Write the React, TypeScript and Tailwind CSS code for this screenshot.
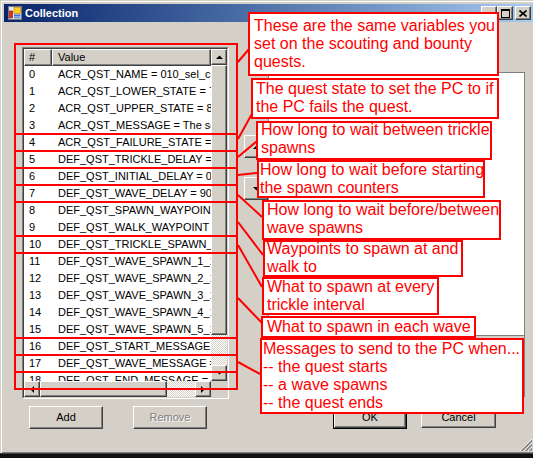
import React from 'react'

const ROWS: string[] = [
  'ACR_QST_NAME = 010_sel_cemetery',
  'ACR_QST_LOWER_STATE = 7',
  'ACR_QST_UPPER_STATE = 8',
  'ACR_QST_MESSAGE = The scouting party',
  'ACR_QST_FAILURE_STATE = 9',
  'DEF_QST_TRICKLE_DELAY = 30',
  'DEF_QST_INITIAL_DELAY = 0',
  'DEF_QST_WAVE_DELAY = 90',
  'DEF_QST_SPAWN_WAYPOINT = wp_spawn',
  'DEF_QST_WALK_WAYPOINT = wp_walk',
  'DEF_QST_TRICKLE_SPAWN_1 = c_zombie',
  'DEF_QST_WAVE_SPAWN_1_1 = c_zombie',
  'DEF_QST_WAVE_SPAWN_2_1 = c_zombie',
  'DEF_QST_WAVE_SPAWN_3_1 = c_ghoul',
  'DEF_QST_WAVE_SPAWN_4_1 = c_ghoul',
  'DEF_QST_WAVE_SPAWN_5_1 = c_wight',
  'DEF_QST_START_MESSAGE = Defend',
  'DEF_QST_WAVE_MESSAGE = Here',
  'DEF_QST_END_MESSAGE = \\n',
]

// red frames drawn over the list rows
const BOXES: string[] = [
  'top-[43px] h-[92px]',
  'top-[133px] h-[19px]',
  'top-[150px] h-[19px]',
  'top-[167px] h-[19px]',
  'top-[184px] h-[19px]',
  'top-[201px] h-[36px]',
  'top-[235px] h-[19px]',
  'top-[252px] h-[87px]',
  'top-[337px] h-[19px]',
  'top-[354px] h-[19px]',
  'top-[371px] h-[19px]',
]

const NOTES: { box: string; inner: string; lines: string[] }[] = [
  { box: 'left-[248px] top-[12px] w-[251px] h-[64px] pl-[4px]', inner: 'mt-[3px]', lines: ['These are the same variables you', 'set on the scouting and bounty', 'quests.'] },
  { box: 'left-[251px] top-[78px] w-[248px] h-[41px] pl-[3px]', inner: '', lines: ['The quest state to set the PC to if', 'the PC fails the quest.'] },
  { box: 'left-[256px] top-[121px] w-[236px] h-[39px] pl-[3px]', inner: '-mt-[2px]', lines: ['How long to wait between trickle', 'spawns'] },
  { box: 'left-[257px] top-[160px] w-[228px] h-[38px] pl-[1px]', inner: '-mt-[1px]', lines: ['How long to wait before starting', 'the spawn counters'] },
  { box: 'left-[262px] top-[200px] w-[239px] h-[40px] pl-[3px]', inner: '-mt-[1px]', lines: ['How long to wait before/between', 'wave spawns'] },
  { box: 'left-[263px] top-[240px] w-[200px] h-[37px] pl-[2px]', inner: '-mt-[2px]', lines: ['Waypoints to spawn at and', 'walk to'] },
  { box: 'left-[262px] top-[277px] w-[177px] h-[38px] pl-[3px]', inner: '-mt-[1px]', lines: ['What to spawn at every', 'trickle interval'] },
  { box: 'left-[261px] top-[316px] w-[215px] h-[22px] pl-[4px]', inner: '', lines: ['What to spawn in each wave'] },
  { box: 'left-[260px] top-[338px] w-[264px] h-[76px] pl-[1px]', inner: '', lines: ['Messages to send to the PC when...', '-- the quest starts', '-- a wave spawns', '-- the quest ends'] },
]

const POINTERS: [number, number, number, number][] = [
  [238, 62, 249, 49],
  [238, 139, 253, 112],
  [238, 157, 257, 141],
  [238, 175, 257, 173],
  [238, 195, 262, 217],
  [238, 222, 263, 255],
  [238, 245, 262, 287],
  [238, 298, 262, 323],
  [238, 362, 260, 374],
]

const raised =
  'border border-t-white border-l-white border-r-[#404040] border-b-[#404040] shadow-[inset_-1px_-1px_0_#808080] bg-[#d4d0c8]'
const hatch =
  'bg-[image:repeating-conic-gradient(#ffffff_0%_25%,#d4d0c8_0%_50%)] bg-[length:2px_2px]'

function Arrow({ dir }: { dir: 'up' | 'down' | 'left' | 'right' }) {
  const vertical = dir === 'up' || dir === 'down'
  const pts = {
    up: '0,4 7,4 3.5,0.5',
    down: '0,0 7,0 3.5,3.5',
    left: '4,0 4,7 0.5,3.5',
    right: '0,0 0,7 3.5,3.5',
  }[dir]
  return (
    <svg width={vertical ? 7 : 4} height={vertical ? 4 : 7} viewBox={vertical ? '0 0 7 4' : '0 0 4 7'}>
      <polygon points={pts} fill="#000" />
    </svg>
  )
}

function ScrollBtn({ dir }: { dir: 'up' | 'down' | 'left' | 'right' }) {
  return (
    <div className={`${raised} w-[16px] h-[16px] shrink-0 flex items-center justify-center`}>
      <Arrow dir={dir} />
    </div>
  )
}

function PushButton({ label, disabled, size }: { label: string; disabled?: boolean; size: string }) {
  return (
    <div className={`${raised} ${size} flex items-center justify-center`}>
      <span className={disabled ? 'text-[#808080] [text-shadow:1px_1px_0_#ffffff]' : ''}>{label}</span>
    </div>
  )
}

function WindowIcon() {
  return (
    <svg width="14" height="14" viewBox="0 0 14 14">
      <rect x="0.5" y="0.5" width="13" height="13" fill="#e8e8e8" stroke="#7a7a7a" />
      <rect x="1.5" y="5" width="3" height="7" fill="#e03020" stroke="#801010" strokeWidth="0.6" />
      <rect x="6" y="1.5" width="6.5" height="6" fill="#ffd020" stroke="#c07000" strokeWidth="0.6" />
      <rect x="6" y="8.5" width="6.5" height="2" fill="#3a6fd8" />
      <rect x="6" y="11" width="6.5" height="1.5" fill="#6a9ae8" />
    </svg>
  )
}

function CaptionButton({ kind }: { kind: 'min' | 'max' | 'close' }) {
  return (
    <div className={`${raised} w-[16px] h-[14px] flex items-center justify-center`}>
      {kind === 'min' && (
        <svg width="8" height="8" viewBox="0 0 8 8">
          <rect x="1" y="6" width="6" height="2" fill="#000" />
        </svg>
      )}
      {kind === 'max' && (
        <svg width="9" height="9" viewBox="0 0 9 9" shapeRendering="crispEdges">
          <rect x="0" y="0" width="9" height="2" fill="#000" />
          <rect x="0" y="0" width="1" height="9" fill="#000" />
          <rect x="8" y="0" width="1" height="9" fill="#000" />
          <rect x="0" y="8" width="9" height="1" fill="#000" />
        </svg>
      )}
      {kind === 'close' && (
        <svg width="8" height="7" viewBox="0 0 8 7">
          <path d="M0.5 0.5 L7.5 6.5 M7.5 0.5 L0.5 6.5" stroke="#000" strokeWidth="1.6" />
        </svg>
      )}
    </div>
  )
}

export default function App() {
  return (
    <div className="relative w-[533px] h-[458px] overflow-hidden bg-[#d4d0c8] font-['Liberation_Sans',Arial,sans-serif] text-[11px] text-black">
      {/* window */}
      <div className="flex flex-col h-[454px] pt-[4px] pl-[4px] border-b border-b-[#404040] shadow-[inset_1px_1px_0_#d4d0c8,inset_2px_2px_0_#ffffff,inset_0_-1px_0_#808080]">
        {/* title bar */}
        <div className="flex items-center h-[18px] shrink-0 bg-linear-to-r from-[#0a246a] to-[#a6caf0]">
          <div className="ml-[4px] flex">
            <WindowIcon />
          </div>
          <span className="ml-[3px] font-bold text-white text-[11px]">Collection</span>
          <div className="ml-auto mr-[2px] flex items-center">
            <CaptionButton kind="min" />
            <CaptionButton kind="max" />
            <div className="ml-[2px]">
              <CaptionButton kind="close" />
            </div>
          </div>
        </div>

        {/* body */}
        <div className="flex-1 flex flex-col">
          <div className="flex items-start pt-[25px] pl-[18px]">
            {/* members list */}
            <div className="w-[207px] flex flex-col">
              <div className="h-[352px] border border-t-[#808080] border-l-[#808080] border-r-white border-b-white">
                <div className="h-full border border-t-[#404040] border-l-[#404040] border-r-[#d4d0c8] border-b-[#d4d0c8] bg-white flex flex-col">
                  <div className="flex-1 flex min-h-0">
                    <div className="flex-1 flex flex-col overflow-hidden">
                      <div className="flex h-[17px] shrink-0">
                        <div className={`${raised} w-[28px] pl-[4px] flex items-center`}>#</div>
                        <div className={`${raised} flex-1 pl-[5px] flex items-center`}>Value</div>
                      </div>
                      <div className="flex-1 overflow-hidden">
                        {ROWS.map((r, i) => (
                          <div key={i} className="flex h-[17px] items-center">
                            <div className="w-[28px] shrink-0 pl-[5px]">{i}</div>
                            <div className="flex-1 pl-[6px] whitespace-nowrap overflow-hidden">{r}</div>
                          </div>
                        ))}
                      </div>
                    </div>
                    <div className="w-[16px] flex flex-col bg-[#d4d0c8]">
                      <ScrollBtn dir="up" />
                      <div className={`${raised} h-[270px] shrink-0`} />
                      <div className={`flex-1 ${hatch}`} />
                      <ScrollBtn dir="down" />
                    </div>
                  </div>
                  <div className="h-[16px] flex shrink-0">
                    <ScrollBtn dir="left" />
                    <div className={`${raised} w-[127px] shrink-0`} />
                    <div className={`flex-1 ${hatch}`} />
                    <ScrollBtn dir="right" />
                    <div className="w-[16px] bg-[#d4d0c8]" />
                  </div>
                </div>
              </div>
              <div className="mt-[7px] flex">
                <div className="ml-[7px]">
                  <PushButton label="Add" size="w-[74px] h-[23px]" />
                </div>
                <div className="ml-[30px]">
                  <PushButton label="Remove" disabled size="w-[74px] h-[23px]" />
                </div>
              </div>
            </div>

            {/* up / down */}
            <div className="ml-[15px] w-[24px] pt-[88px] flex flex-col">
              <div className={`${raised} h-[23px] flex items-center justify-center`}>
                <Arrow dir="up" />
              </div>
              <div className={`${raised} mt-[19px] h-[23px] flex items-center justify-center`}>
                <Arrow dir="down" />
              </div>
            </div>

            {/* properties */}
            <div className="w-[257px] flex flex-col">
              <div className="mt-[25px] h-[325px] border border-[#808080] flex flex-col">
                <div className="flex-1 bg-white" />
                <div className="h-[61px] border-t border-[#808080] bg-[#d4d0c8]" />
              </div>
              <div className="mt-[9px] flex items-start pl-[65px]">
                <div className="border border-black">
                  <PushButton label="OK" size="w-[72px] h-[21px]" />
                </div>
                <div className="ml-[14px]">
                  <PushButton label="Cancel" size="w-[75px] h-[22px]" />
                </div>
              </div>
            </div>
          </div>

          {/* size grip */}
          <div className="mt-auto mb-[1px] flex justify-end pr-[1px] h-[14px]">
            <svg width="13" height="13" viewBox="0 0 13 13">
              {[0, 4, 8].map(k => (
                <g key={k}>
                  <line x1={13} y1={k + 1} x2={k + 1} y2={13} stroke="#ffffff" strokeWidth="1" />
                  <line x1={13} y1={k + 2.5} x2={k + 2.5} y2={13} stroke="#808080" strokeWidth="1.6" />
                </g>
              ))}
            </svg>
          </div>
        </div>
      </div>
      <div className="h-[4px] bg-[#111111]" />

      {/* annotation overlay */}
      {BOXES.map((b, i) => (
        <div key={i} className={`absolute left-[14px] w-[224px] border-2 border-[#ff0000] ${b}`} />
      ))}
      <svg className="absolute top-0 left-0" width="533" height="458" viewBox="0 0 533 458">
        {POINTERS.map(([x1, y1, x2, y2], i) => (
          <line key={i} x1={x1} y1={y1} x2={x2} y2={y2} stroke="#ff0000" strokeWidth="2" />
        ))}
      </svg>
      {NOTES.map((n, i) => (
        <div
          key={i}
          className={`absolute ${n.box} bg-white border-2 border-[#ff0000] text-[#ff0000] text-[16px] leading-[18px] whitespace-nowrap overflow-hidden`}
        >
          <div className={n.inner}>
            {n.lines.map((l, j) => (
              <div key={j}>{l}</div>
            ))}
          </div>
        </div>
      ))}
    </div>
  )
}
